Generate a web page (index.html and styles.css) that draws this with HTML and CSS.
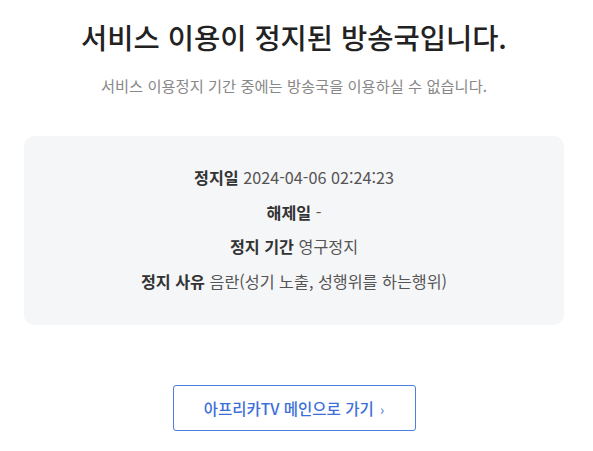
FILE: index.html
```html
<!DOCTYPE html>
<html lang="ko">
<head>
    <meta charset="UTF-8">
    <title>방송국 이용 정지</title>
    <link rel="stylesheet" href="styles.css">
</head>
<body>
<div class="wrap">
    <h2 class="title">서비스 이용이 정지된 방송국입니다.</h2>
    <p class="desc">서비스 이용정지 기간 중에는 방송국을 이용하실 수 없습니다.</p>

    <div class="info">
        <p><strong>정지일</strong> 2024-04-06 02:24:23</p>
        <p><strong>해제일</strong> -</p>
        <p><strong>정지 기간</strong> 영구정지</p>
        <p><strong>정지 사유</strong> 음란(성기 노출, 성행위를 하는행위)</p>
    </div>

    <div class="actions">
        <a class="btn" href="#">아프리카TV 메인으로 가기 <span class="arrow">›</span></a>
    </div>
</div>
</body>
</html>
```

FILE: styles.css
```css
body {
    font-family: "Noto Sans CJK KR", "Noto Sans", sans-serif;
    background: #fff;
    color: #333;
    margin: 0;
    padding: 0;
}

.wrap {
    padding: 0 29px 0 24px;
    text-align: center;
}

.title {
    margin: 0;
    padding-top: 16px;
    font-size: 28.5px;
    font-weight: 500;
    line-height: 42px;
    color: #222;
}

.desc {
    margin: 17px 0 0;
    font-size: 15.3px;
    line-height: 20px;
    color: #888;
}

.info {
    margin-top: 41px;
    background: #f5f6f8;
    border-radius: 10px;
    padding: 24px 0 26px;
}

.info p {
    margin: 0;
    font-size: 16.2px;
    line-height: 34.7px;
    color: #555;
}

.info strong {
    color: #333;
    font-weight: 700;
}

.actions {
    margin-top: 60px;
}

.btn {
    display: inline-block;
    width: 241px;
    height: 44px;
    line-height: 44px;
    border: 1px solid #4d7ee0;
    border-radius: 3px;
    color: #3d6fd8;
    font-size: 15.5px;
    font-weight: 500;
    text-decoration: none;
}

.arrow {
    font-size: 14px;
    font-weight: 400;
    margin-left: 2px;
}
```
